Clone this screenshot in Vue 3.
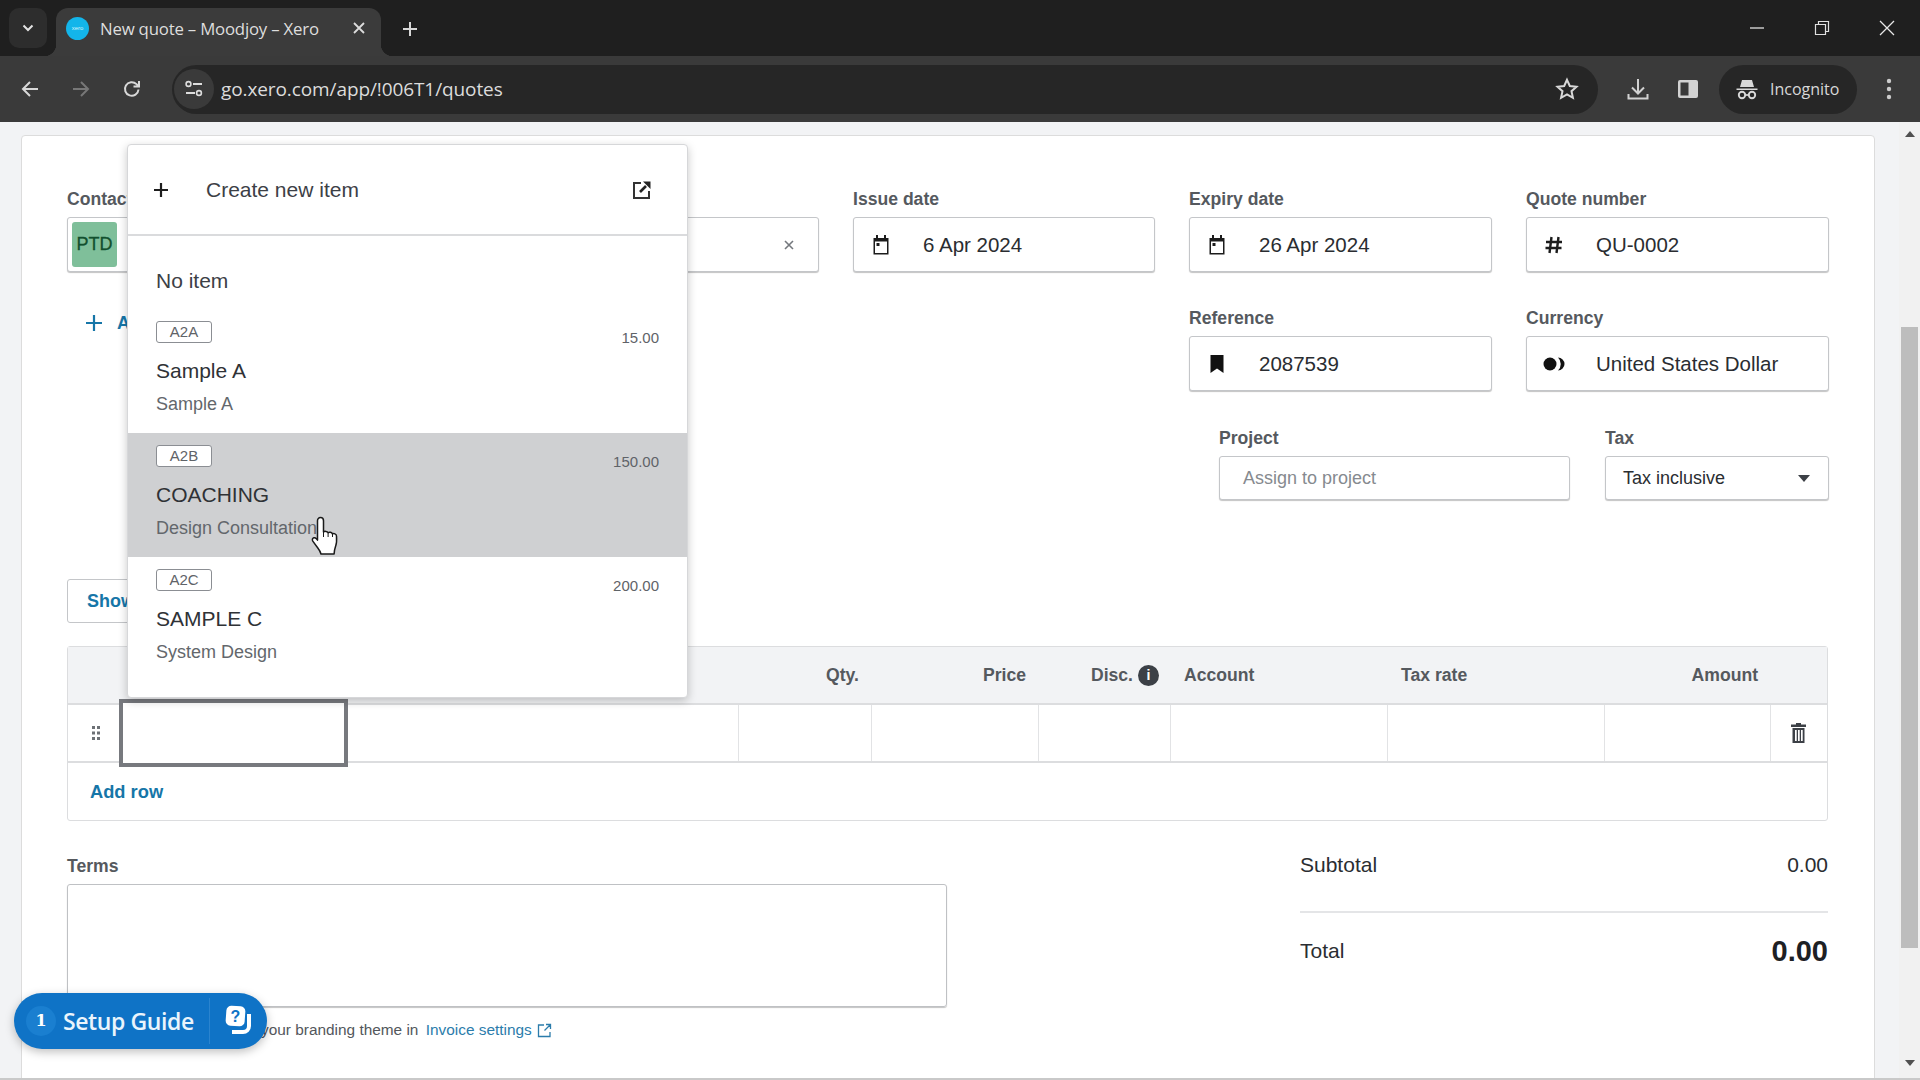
<template>
  <div class="app">
    <!-- browser tab strip -->
    <div class="tabstrip">
      <button class="tab-search" type="button">
        <svg width="14" height="14" viewBox="0 0 14 14"><path d="M2.5 4.5 7 9l4.5-4.5" fill="none" stroke="#e3e3e3" stroke-width="2"/></svg>
      </button>
      <div class="tab">
        <span class="favicon">xero</span>
        <span class="tab-title">New quote – Moodjoy – Xero</span>
        <svg class="tab-close" width="14" height="14" viewBox="0 0 14 14"><path d="M2 2l10 10M12 2 2 12" stroke="#dcdcdc" stroke-width="1.8"/></svg>
      </div>
      <svg class="tab-new" width="18" height="18" viewBox="0 0 18 18"><path d="M9 2v14M2 9h14" stroke="#d8d8d8" stroke-width="2"/></svg>
      <div class="win-controls">
        <svg width="16" height="16" viewBox="0 0 16 16"><path d="M1 8h14" stroke="#e0e0e0" stroke-width="1.3"/></svg>
        <svg width="16" height="16" viewBox="0 0 16 16"><path d="M1.5 4.5h10v10h-10zM4.5 4.5v-3h10v10h-3" fill="none" stroke="#e0e0e0" stroke-width="1.2"/></svg>
        <svg width="16" height="16" viewBox="0 0 16 16"><path d="M1 1l14 14M15 1 1 15" stroke="#e8e8e8" stroke-width="1.3"/></svg>
      </div>
    </div>

    <!-- browser toolbar -->
    <div class="toolbar">
      <svg class="nav" width="20" height="20" viewBox="0 0 20 20"><path d="M18 10H3M10 3l-7 7 7 7" fill="none" stroke="#d8d8d8" stroke-width="2"/></svg>
      <svg class="nav" width="20" height="20" viewBox="0 0 20 20"><path d="M2 10h15M10 3l7 7-7 7" fill="none" stroke="#777" stroke-width="2"/></svg>
      <svg class="nav" width="20" height="20" viewBox="0 0 20 20"><path d="M16.5 10.5a6.8 6.8 0 1 1-2-5.4L17 7.5M17 2v5.5h-5.5" fill="none" stroke="#d8d8d8" stroke-width="2"/></svg>
      <div class="address">
        <span class="site-info">
          <svg width="20" height="18" viewBox="0 0 20 18">
            <circle cx="4.5" cy="4" r="2.4" fill="none" stroke="#ddd" stroke-width="1.6"/>
            <path d="M9 4h9M2 13h9" stroke="#ddd" stroke-width="1.8"/>
            <circle cx="15" cy="13" r="2.4" fill="none" stroke="#ddd" stroke-width="1.6"/>
          </svg>
        </span>
        <span class="url">go.xero.com/app/!006T1/quotes</span>
        <svg class="star" width="24" height="24" viewBox="0 0 24 24"><path d="M12 2.8l2.8 6.2 6.700.7-5 4.500 1.400 6.600L12 17.400l-5.900 3.400 1.400-6.600-5-4.500 6.700-.7z" fill="none" stroke="#d8d8d8" stroke-width="2"/></svg>
      </div>
      <svg class="tool-download" width="24" height="24" viewBox="0 0 24 24"><path d="M12 2v14M6 10.500l6 6 6-6M2.500 17v4.500h19V17" fill="none" stroke="#d2d2d2" stroke-width="2"/></svg>
      <svg class="tool-panel" width="22" height="22" viewBox="0 0 22 22"><rect x="1" y="2" width="20" height="18" rx="2" fill="#d2d2d2"/><rect x="3.500" y="4.500" width="8" height="13" fill="#3a3a3a"/></svg>
      <div class="incognito">
        <svg width="24" height="24" viewBox="0 0 24 24">
          <path d="M7 3h10l2 7H5zM1.500 11.500h21v1.600h-21z" fill="#d8d8d8"/>
          <circle cx="7" cy="18" r="3.200" fill="none" stroke="#d8d8d8" stroke-width="1.900"/>
          <circle cx="17" cy="18" r="3.200" fill="none" stroke="#d8d8d8" stroke-width="1.900"/>
          <path d="M10 18h4" stroke="#d8d8d8" stroke-width="1.700"/>
        </svg>
        <span>Incognito</span>
      </div>
      <svg class="tool-menu" width="6" height="22" viewBox="0 0 6 22"><circle cx="3" cy="3" r="2.200" fill="#ccc"/><circle cx="3" cy="11" r="2.200" fill="#ccc"/><circle cx="3" cy="19" r="2.200" fill="#ccc"/></svg>
    </div>

    <div class="page">
      <div class="viewport">
        <div class="card">
          <div class="form">
            <div class="form-item">
              <label class="label">Contact</label>
              <div class="field contact">
                <span class="avatar">PTD</span>
                <svg class="clear" width="12" height="12" viewBox="0 0 12 12"><path d="M2 2l8 8M10 2l-8 8" stroke="#74787d" stroke-width="1.600"/></svg>
              </div>
            </div>
            <div class="form-item" v-for="f in topFields" :key="f.label">
              <label class="label">{{ f.label }}</label>
              <div class="field">
                <span class="field-icon">
                  <svg v-if="f.icon === 'calendar'" width="18" height="20" viewBox="0 0 18 20">
                    <path d="M4 0h2v3h6V0h2v3h2.500v16.500h-15V3H4z" fill="#1c1c1c"/>
                    <rect x="3" y="6.500" width="12" height="11.500" fill="#fff"/>
                    <rect x="4.500" y="8" width="3" height="3" fill="#1c1c1c"/>
                  </svg>
                  <svg v-if="f.icon === 'hash'" width="20" height="20" viewBox="0 0 20 20"><path d="M7.500 2 5.500 18M14.500 2l-2 16M2 7h16M1.500 13h16" stroke="#1c1c1c" stroke-width="2.400" fill="none"/></svg>
                </span>
                <span class="field-value">{{ f.value }}</span>
              </div>
            </div>
            <div class="add-link">
              <svg width="18" height="18" viewBox="0 0 18 18"><path d="M9 1v16M1 9h16" stroke="#1676a8" stroke-width="2.200"/></svg>
              <span>Add</span>
            </div>
            <div class="form-item" v-for="f in midFields" :key="f.label" :class="f.cls">
              <label class="label">{{ f.label }}</label>
              <div class="field">
                <span class="field-icon">
                  <svg v-if="f.icon === 'bookmark'" width="16" height="18" viewBox="0 0 16 18"><path d="M1.500 0h13v18L8 13.500 1.500 18z" fill="#111"/></svg>
                  <svg v-if="f.icon === 'currency'" width="22" height="14" viewBox="0 0 22 14"><circle cx="7" cy="7" r="6.500" fill="#111"/><path d="M15 .5a6.500 6.500 0 0 1 0 13 9 9 0 0 0 0-13z" fill="#111"/></svg>
                </span>
                <span class="field-value">{{ f.value }}</span>
              </div>
            </div>
            <div class="form-extra">
              <div class="form-item project">
                <label class="label">Project</label>
                <div class="field small"><span class="placeholder">Assign to project</span></div>
              </div>
              <div class="form-item tax">
                <label class="label">Tax</label>
                <div class="field small">
                  <span class="small-value">Tax inclusive</span>
                  <span class="caret"></span>
                </div>
              </div>
            </div>
          </div>

          <button class="show-btn" type="button">Show more</button>

          <div class="table">
            <div class="t-row t-head">
              <div></div>
              <div></div>
              <div></div>
              <div class="right">Qty.</div>
              <div class="right">Price</div>
              <div class="right disc">
                Disc.
                <span class="info">i</span>
              </div>
              <div>Account</div>
              <div>Tax rate</div>
              <div class="right">Amount</div>
              <div></div>
            </div>
            <div class="t-row t-body">
              <div class="cell handle">
                <svg width="10" height="16" viewBox="0 0 10 16">
                  <g fill="#6d7176">
                    <rect x="1" y="1" width="3" height="3"/><rect x="6" y="1" width="3" height="3"/>
                    <rect x="1" y="6.500" width="3" height="3"/><rect x="6" y="6.500" width="3" height="3"/>
                    <rect x="1" y="12" width="3" height="3"/><rect x="6" y="12" width="3" height="3"/>
                  </g>
                </svg>
              </div>
              <div class="cell item-cell"><div class="focus-box"></div></div>
              <div class="cell" v-for="n in 6" :key="n"></div>
              <div class="cell last"></div>
              <div class="cell trash">
                <svg width="15" height="20" viewBox="0 0 15 20">
                  <path d="M5 0h5v1.500h5v2.500H0V1.500h5z" fill="#3c4046"/>
                  <path d="M1.500 5h12v15h-12zM4 7v11h1.700V7zm3 0v11h1.700V7zm3 0v11h1.700V7z" fill="#3c4046" fill-rule="evenodd"/>
                </svg>
              </div>
            </div>
            <div class="add-row">Add row</div>
          </div>

          <div class="bottom">
            <div class="terms">
              <label class="label">Terms</label>
              <div class="terms-box"></div>
              <p class="hint">
                <span>your branding theme in </span><span class="hint-link">Invoice settings</span>
                <svg width="15" height="15" viewBox="0 0 15 15"><path d="M7 2H1.500v11.500h11.500V9M9 1.500h4.500V6M13.500 1.500 7.500 7.500" fill="none" stroke="#2b7cab" stroke-width="1.300"/></svg>
              </p>
            </div>
            <div class="totals">
              <div class="sub-row"><span>Subtotal</span><span>0.00</span></div>
              <div class="total-row"><span>Total</span><span class="total-value">0.00</span></div>
            </div>
          </div>
        </div>
      </div>

      <div class="scrollbar">
        <span class="arrow up"></span>
        <div class="thumb"></div>
        <span class="arrow down"></span>
      </div>
    </div>

    <!-- item dropdown -->
    <div class="dropdown">
      <div class="dd-create">
        <svg width="16" height="16" viewBox="0 0 16 16"><path d="M8 1v14M1 8h14" stroke="#1d1d1d" stroke-width="2.200"/></svg>
        <span class="dd-create-text">Create new item</span>
        <svg class="dd-open" width="20" height="20" viewBox="0 0 20 20">
          <path d="M9 3H2v15h15v-7" fill="none" stroke="#333" stroke-width="2"/>
          <path d="M8 12l6-6" stroke="#222" stroke-width="2.600"/>
          <path d="M11 1.500h7.500V9z" fill="#222"/>
        </svg>
      </div>
      <div class="dd-list">
        <div class="dd-none">No item</div>
        <div class="dd-item" v-for="it in items" :key="it.code" :class="{ hover: it.hover }">
          <div class="dd-top">
            <span class="dd-tag">{{ it.code }}</span>
            <span class="dd-price">{{ it.price }}</span>
          </div>
          <div class="dd-name">{{ it.name }}</div>
          <div class="dd-sub">{{ it.sub }}</div>
        </div>
      </div>
    </div>

    <!-- mouse pointer -->
    <svg class="pointer" width="28" height="40" viewBox="0 0 28 40">
      <path d="M9.500 1.500c1.800 0 3 1.300 3 3.200v11.300c.8-.9 3.800-1 4.600.8 1-.9 3.900-.8 4.400 1.200 1.200-.8 3.800-.3 4 2 .3 4 .2 7.200-.8 10-.6 1.800-1.400 3.400-1.600 8H10c-.5-2.500-2-4.500-3.500-6.500-1.600-2.100-3.400-4.400-4.700-6.300-.9-1.500-.3-3 1-3.400 1-.3 1.900.2 2.600 1l1.100 1.300V4.700c0-1.900 1.200-3.200 3-3.200z" fill="#fff" stroke="#1a1a1a" stroke-width="1.500" stroke-linejoin="round"/>
      <path d="M12.500 16v5M17.100 17v4M21.500 18v3" stroke="#1a1a1a" stroke-width="1"/>
    </svg>

    <!-- setup guide pill -->
    <div class="setup">
      <span class="setup-count">1</span>
      <span class="setup-text">Setup Guide</span>
      <span class="setup-icon">
        <svg width="30" height="32" viewBox="0 0 30 32">
          <path d="M25 9v12a6 6 0 0 1-6 6H8" fill="none" stroke="#fff" stroke-width="4"/>
          <rect x="2" y="1" width="19" height="20" rx="5" fill="#fff" transform="rotate(4 11 11)"/>
          <text x="11.500" y="17" text-anchor="middle" class="setup-q">?</text>
        </svg>
      </span>
    </div>
  </div>
</template>

<script setup>
const topFields = [
  { label: 'Issue date', icon: 'calendar', value: '6 Apr 2024' },
  { label: 'Expiry date', icon: 'calendar', value: '26 Apr 2024' },
  { label: 'Quote number', icon: 'hash', value: 'QU-0002' }
]

const midFields = [
  { label: 'Reference', icon: 'bookmark', value: '2087539', cls: 'col-3' },
  { label: 'Currency', icon: 'currency', value: 'United States Dollar', cls: 'col-4' }
]

const items = [
  { code: 'A2A', price: '15.00', name: 'Sample A', sub: 'Sample A' },
  { code: 'A2B', price: '150.00', name: 'COACHING', sub: 'Design Consultation', hover: true },
  { code: 'A2C', price: '200.00', name: 'SAMPLE C', sub: 'System Design' }
]
</script>

<style>
html, body {
  margin: 0;
  overflow: hidden;
}
</style>

<style scoped>
.app {
  position: relative;
  width: 1920px;
  height: 1080px;
  overflow: hidden;
  display: flex;
  flex-direction: column;
  font-family: "Liberation Sans", Arial, sans-serif;
  background: #f2f3f5;
}

/* browser chrome */
.tabstrip {
  height: 56px;
  flex: none;
  background: #1f1f1f;
  display: flex;
  align-items: flex-end;
  position: relative;
}

.tab-search {
  width: 38px;
  height: 40px;
  margin: 0 9px 8px 9px;
  padding: 0;
  border: none;
  border-radius: 10px;
  background: #2d2d2d;
  display: flex;
  align-items: center;
  justify-content: center;
}

.tab {
  width: 325px;
  height: 48px;
  box-sizing: border-box;
  padding: 0 15px 8px 10px;
  background: #3b3b3b;
  border-radius: 12px 12px 0 0;
  display: flex;
  align-items: center;
  position: relative;
}

.tab::before,
.tab::after {
  content: "";
  position: absolute;
  bottom: 0;
  width: 12px;
  height: 12px;
}

.tab::before {
  left: -12px;
  background: radial-gradient(circle at 0 0, transparent 12px, #3b3b3b 12.5px);
}

.tab::after {
  right: -12px;
  background: radial-gradient(circle at 100% 0, transparent 12px, #3b3b3b 12.5px);
}

.favicon {
  width: 23px;
  height: 23px;
  border-radius: 50%;
  background: #13b5ea;
  color: #d7f3fc;
  font-size: 6px;
  display: flex;
  align-items: center;
  justify-content: center;
  flex: none;
}

.tab-title {
  margin-left: 11px;
  flex: 1;
  font-family: "Open Sans", sans-serif;
  font-size: 16.8px;
  letter-spacing: -0.2px;
  color: #dedede;
  white-space: nowrap;
}

.tab-new {
  margin: 0 0 18px 20px;
}

.win-controls {
  position: absolute;
  top: 20px;
  right: 25px;
  display: flex;
  gap: 49px;
}

.toolbar {
  height: 66px;
  flex: none;
  background: #3a3a3a;
  display: flex;
  align-items: center;
  box-sizing: border-box;
  padding-left: 20px;
  position: relative;
}

.nav {
  margin-right: 31px;
  flex: none;
}

.address {
  width: 1426px;
  height: 49px;
  margin-left: -1px;
  background: #262626;
  border-radius: 25px;
  display: flex;
  align-items: center;
  flex: none;
}

.site-info {
  width: 40px;
  height: 40px;
  margin-left: 2px;
  border-radius: 50%;
  background: #3a3a3a;
  display: flex;
  align-items: center;
  justify-content: center;
}

.url {
  margin-left: 7px;
  flex: 1;
  font-family: "Open Sans", sans-serif;
  font-size: 19px;
  letter-spacing: -0.1px;
  color: #dcdcdc;
}

.star {
  margin-right: 19px;
}

.tool-download {
  margin-left: 28px;
  flex: none;
}

.tool-panel {
  margin-left: 27px;
  flex: none;
}

.incognito {
  width: 138px;
  height: 49px;
  margin-left: 20px;
  box-sizing: border-box;
  padding-left: 16px;
  background: #262626;
  border-radius: 25px;
  display: flex;
  align-items: center;
  gap: 11px;
  font-family: "Open Sans", sans-serif;
  font-size: 16px;
  color: #d8d8d8;
  flex: none;
}

.tool-menu {
  margin-left: 29px;
  flex: none;
}

/* page */
.page {
  flex: 1;
  min-height: 0;
  display: flex;
  border-bottom: 2px solid #c9c9c9;
}

.viewport {
  flex: 1;
  min-width: 0;
  overflow: hidden;
  padding: 13px 0 0 21px;
}

.card {
  width: 1854px;
  height: 1100px;
  box-sizing: border-box;
  padding: 51px 46px 0 45px;
  background: #fff;
  border: 1px solid #dcdcdc;
  border-radius: 4px 4px 0 0;
}

.form {
  display: grid;
  grid-template-columns: 752px 302px 303px 303px;
  column-gap: 34px;
  row-gap: 34px;
}

.label {
  display: block;
  height: 24px;
  margin-bottom: 6px;
  line-height: 24px;
  font-size: 17.6px;
  font-weight: 700;
  color: #55595e;
}

.field {
  height: 55px;
  box-sizing: border-box;
  background: #fff;
  border: 1px solid #c4c6c9;
  border-radius: 3px;
  box-shadow: 0 1px 1px #c4c4c4;
  display: flex;
  align-items: center;
}

.field-icon {
  width: 24px;
  margin-left: 15px;
  display: flex;
  justify-content: center;
  flex: none;
}

.field-value {
  margin-left: 30px;
  font-size: 20.5px;
  color: #2a2d31;
  white-space: nowrap;
}

.contact {
  padding: 0 23px 0 4px;
  justify-content: space-between;
}

.avatar {
  width: 45px;
  height: 45px;
  border-radius: 3px;
  background: #7fbf9a;
  color: #12502e;
  font-size: 18px;
  font-weight: 400;
  -webkit-text-stroke: 0.3px #12502e;
  display: flex;
  align-items: center;
  justify-content: center;
}

.add-link {
  grid-column: 1 / 3;
  height: 34px;
  padding-left: 18px;
  display: flex;
  align-items: center;
  gap: 14px;
  font-size: 18px;
  font-weight: 700;
  color: #1676a8;
}

.col-3 {
  grid-column: 3;
}

.col-4 {
  grid-column: 4;
}

.form-extra {
  grid-column: 2 / 5;
  margin-top: 1px;
  display: flex;
  justify-content: flex-end;
  gap: 35px;
}

.project {
  width: 351px;
}

.tax {
  width: 224px;
}

.small {
  height: 44px;
  padding: 0 18px 0 17px;
  justify-content: space-between;
}

.project .small {
  padding-left: 23px;
}

.placeholder {
  font-size: 18px;
  color: #868a8f;
}

.small-value {
  font-size: 18px;
  color: #2a2d31;
}

.caret {
  width: 0;
  height: 0;
  border-left: 6px solid transparent;
  border-right: 6px solid transparent;
  border-top: 7px solid #3c4046;
}

.show-btn {
  display: block;
  width: 200px;
  height: 44px;
  margin-top: 79px;
  padding: 0 0 0 19px;
  text-align: left;
  background: #fff;
  border: 1px solid #c4c6c9;
  border-radius: 3px;
  font-family: inherit;
  font-size: 18px;
  font-weight: 700;
  color: #1676a8;
}

.table {
  margin-top: 23px;
  border: 1px solid #dcdddf;
  border-radius: 3px;
}

.t-row {
  display: grid;
  box-sizing: border-box;
  grid-template-columns: 54px 224px 393px 133px 167px 132px 217px 217px 166px 57px;
}

.t-head {
  height: 58px;
  background: #f2f3f5;
  border-bottom: 2px solid #dcdddf;
  align-items: center;
  font-size: 17.6px;
  font-weight: 700;
  color: #55595e;
}

.t-head > div {
  padding: 0 13px;
  box-sizing: border-box;
}

.right {
  text-align: right;
}

.t-head .disc {
  display: flex;
  align-items: center;
  justify-content: flex-end;
  gap: 5px;
  padding: 0 12px 0 0;
}

.info {
  width: 21px;
  height: 21px;
  border-radius: 50%;
  background: #3c4046;
  color: #fff;
  font-size: 14px;
  line-height: 21px;
  text-align: center;
}

.t-body {
  height: 58px;
  border-bottom: 2px solid #dcdddf;
}

.cell {
  position: relative;
  border-right: 1px solid #e2e3e5;
}

.handle,
.trash {
  border-right: none;
  display: flex;
  align-items: center;
  justify-content: center;
}

.handle {
  padding-left: 2px;
  box-sizing: border-box;
}

.trash {
  padding-right: 3px;
}

.item-cell {
  border-right: none;
}

.focus-box {
  position: absolute;
  top: -6px;
  bottom: -6px;
  left: -3px;
  right: -2px;
  background: #fff;
  border: 4px solid #77797e;
}

.add-row {
  height: 57px;
  padding-left: 22px;
  display: flex;
  align-items: center;
  font-size: 18.3px;
  font-weight: 700;
  color: #1676a8;
}

.bottom {
  margin-top: 33px;
  display: flex;
  justify-content: space-between;
}

.terms {
  width: 880px;
}

.terms-box {
  height: 123px;
  box-sizing: border-box;
  border: 1px solid #bfc1c4;
  border-radius: 3px;
  box-shadow: 0 1px 1px #c4c4c4;
}

.hint {
  margin: 14px 0 0 194px;
  display: flex;
  align-items: center;
  gap: 5px;
  font-size: 15.4px;
  line-height: 18px;
  color: #53575c;
  white-space: pre;
}

.hint-link {
  margin-left: -2px;
  color: #2b7cab;
}

.totals {
  width: 528px;
  margin-top: -1px;
  font-size: 21px;
  color: #2a2d31;
}

.sub-row {
  height: 24px;
  line-height: 24px;
  display: flex;
  justify-content: space-between;
  padding-bottom: 34px;
  border-bottom: 2px solid #e4e5e7;
}

.total-row {
  margin-top: 18px;
  height: 40px;
  display: flex;
  justify-content: space-between;
  align-items: center;
}

.total-value {
  font-size: 29px;
  font-weight: 700;
  color: #1d2024;
}

/* scrollbar */
.scrollbar {
  width: 21px;
  flex: none;
  background: #f1f1f1;
  position: relative;
}

.thumb {
  position: absolute;
  top: 205px;
  left: 2px;
  width: 17px;
  height: 621px;
  background: #bdbdbd;
}

.arrow {
  position: absolute;
  left: 6px;
  width: 0;
  height: 0;
  border-left: 5px solid transparent;
  border-right: 5px solid transparent;
}

.arrow.up {
  top: 9px;
  border-bottom: 6px solid #505050;
}

.arrow.down {
  bottom: 12px;
  border-top: 6px solid #505050;
}

/* dropdown */
.dropdown {
  position: absolute;
  left: 127px;
  top: 144px;
  width: 561px;
  height: 554px;
  box-sizing: border-box;
  background: #fff;
  border: 1px solid #d6d7d9;
  border-radius: 4px;
  box-shadow: 0 3px 10px rgba(0, 0, 0, 0.22);
}

.dd-create {
  height: 91px;
  box-sizing: border-box;
  padding: 0 35px 0 25px;
  border-bottom: 2px solid #dadbdd;
  display: flex;
  align-items: center;
}

.dd-create-text {
  margin-left: 37px;
  flex: 1;
  font-size: 21px;
  color: #3c4046;
}

.dd-list {
  padding: 16px 0;
}

.dd-none {
  height: 57px;
  padding: 0 28px;
  line-height: 57px;
  font-size: 21px;
  color: #3c4046;
}

.dd-item {
  height: 124px;
  box-sizing: border-box;
  padding: 12px 28px 0 28px;
}

.dd-item.hover {
  background: #cfd0d2;
}

.dd-top {
  height: 22px;
  display: flex;
  justify-content: space-between;
}

.dd-tag {
  width: 56px;
  height: 22px;
  box-sizing: border-box;
  border: 1px solid #8b8e93;
  border-radius: 3px;
  background: #fff;
  font-size: 15px;
  line-height: 20px;
  text-align: center;
  color: #5f6368;
}

.dd-price {
  margin-top: 6px;
  font-size: 15px;
  line-height: 22px;
  color: #5f6368;
}

.dd-name {
  margin-top: 15px;
  height: 26px;
  line-height: 26px;
  font-size: 21px;
  color: #2f3236;
}

.dd-sub {
  margin-top: 9px;
  height: 22px;
  line-height: 22px;
  font-size: 18px;
  color: #63676c;
}

.pointer {
  position: absolute;
  left: 311px;
  top: 516px;
}

/* setup guide */
.setup {
  position: absolute;
  left: 14px;
  top: 993px;
  width: 253px;
  height: 56px;
  border-radius: 28px;
  background: #0f73c6;
  box-shadow: 0 3px 10px rgba(0, 0, 0, 0.25);
  display: flex;
  align-items: center;
  color: #fff;
}

.setup-count {
  width: 30px;
  height: 30px;
  margin-left: 12px;
  border-radius: 50%;
  background: #1a7fd0;
  font-family: "DejaVu Serif", serif;
  font-size: 16px;
  font-weight: 700;
  line-height: 30px;
  text-align: center;
}

.setup-text {
  margin-left: 7px;
  width: 146px;
  font-family: "Open Sans", sans-serif;
  font-size: 23px;
  font-weight: 600;
  letter-spacing: -0.4px;
  white-space: nowrap;
  color: #eaf4fc;
}

.setup-icon {
  height: 46px;
  padding-left: 14px;
  border-left: 1px solid #2a84cf;
  display: flex;
  align-items: center;
}

.setup-q {
  font-family: "Liberation Sans", sans-serif;
  font-size: 16px;
  font-weight: 700;
  fill: #0f73c6;
}
</style>
